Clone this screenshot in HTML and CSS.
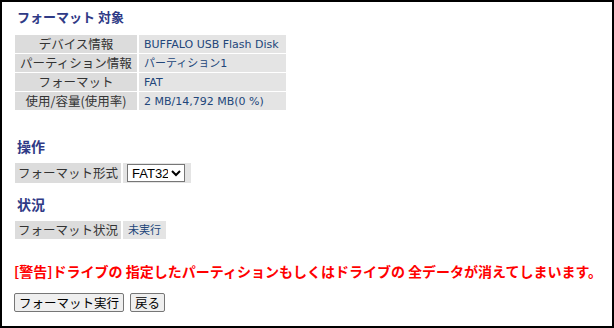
FILE: index.html
```html
<!DOCTYPE html>
<html lang="ja">
<head>
<meta charset="utf-8">
<title>フォーマット</title>
<link rel="stylesheet" href="styles.css">
</head>
<body>
<div class="frame">
  <h2 class="head head-first">フォーマット 対象</h2>
  <table class="info info-main">
    <tr><th>デバイス情報</th><td>BUFFALO USB Flash Disk</td></tr>
    <tr><th>パーティション情報</th><td>パーティション1</td></tr>
    <tr><th>フォーマット</th><td>FAT</td></tr>
    <tr><th>使用/容量(使用率)</th><td>2 MB/14,792 MB(0 %)</td></tr>
  </table>

  <h2 class="head head-op">操作</h2>
  <table class="info">
    <tr><th>フォーマット形式</th><td class="sel-cell"><select class="fmt"><option>FAT32</option><option>FAT</option><option>NTFS</option></select></td></tr>
  </table>

  <h2 class="head head-st">状況</h2>
  <table class="info">
    <tr><th>フォーマット状況</th><td>未実行</td></tr>
  </table>

  <p class="warn">[警告]ドライブの 指定したパーティションもしくはドライブの 全データが消えてしまいます。</p>

  <div class="actions">
    <button class="btn" type="button">フォーマット実行</button>
    <button class="btn" type="button">戻る</button>
  </div>
</div>
</body>
</html>
```
FILE: styles.css
```css
html, body {
  margin: 0;
  padding: 0;
  background: #fff;
}
.frame {
  box-sizing: border-box;
  width: 614px;
  height: 328px;
  border: 2px solid #000;
  padding: 0 10px;
  font-family: "Noto Sans CJK JP", "Noto Sans", sans-serif;
  color: #333;
}
.head {
  margin: 0 0 0 5px;
  font-size: 14px;
  line-height: 18px;
  font-weight: bold;
  color: #2f3a86;
}
.head-first { margin-top: 6px; margin-bottom: 8px; font-size: 13px; }
.head-op { margin-top: 26px; margin-bottom: 7px; }
.head-st { margin-top: 11px; margin-bottom: 7px; }
.info {
  border-collapse: separate;
  border-spacing: 2px 1px;
  margin: 0 0 0 1px;
}
.info th {
  background: #dcdcdc;
  font-weight: normal;
  font-size: 12.5px;
  line-height: 18px;
  height: 18px;
  padding: 0 3px;
  text-align: center;
  color: #333;
  white-space: nowrap;
}
.info-main th {
  width: 116px;
}
.info td {
  background: #e4e4e4;
  font-family: "DejaVu Sans", "Noto Sans CJK JP", sans-serif;
  font-size: 11px;
  line-height: 16px;
  height: 16px;
  padding: 2px 5px 0 5px;
  color: #22467a;
  white-space: nowrap;
}
.info-main td {
  width: 137px;
}
.info td.sel-cell {
  padding: 1px 6px 1px 4px;
  line-height: 18px;
  height: 18px;
}
.fmt {
  font-family: "Liberation Sans", sans-serif;
  font-size: 13px;
  height: 18px;
  width: 58px;
  padding: 0;
  border: 1px solid #767676;
  border-radius: 0;
  background: #fff;
  color: #000;
  margin: 0;
  vertical-align: middle;
}
.warn {
  margin: 22px 0 0 2px;
  font-size: 14px;
  line-height: 18px;
  font-weight: bold;
  color: #ff0000;
  white-space: nowrap;
}
.actions {
  display: flex;
  gap: 6px;
  margin: 13px 0 0 2px;
}
.btn {
  font-family: "Noto Sans CJK JP", sans-serif;
  font-size: 12.5px;
  line-height: 15px;
  height: 19px;
  padding: 0 4px;
  background: #efefef;
  border: 1px solid #767676;
  border-radius: 2px;
  color: #000;
}
```
